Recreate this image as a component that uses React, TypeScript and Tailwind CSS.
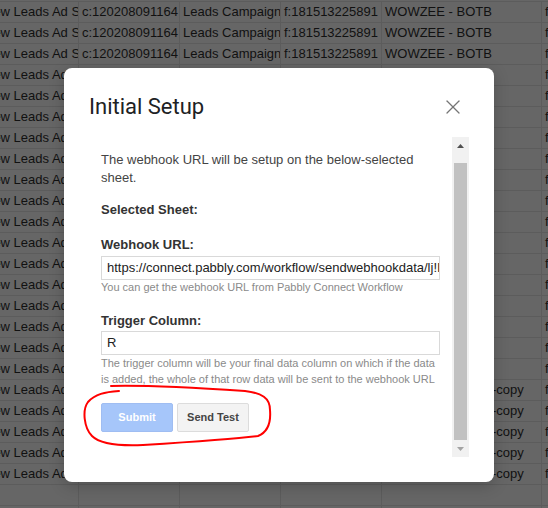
import { X } from "lucide-react";

const COLS = [98, 101, 101, 101, 160, 60];

type Row = string[];

function makeRows(): Row[] {
  const rows: Row[] = [];
  for (let i = 0; i < 23; i++) {
    const campaign = i < 18 ? "WOWZEE - BOTB" : "WOWZEE - BOTB-copy";
    rows.push([
      "New Leads Ad Set",
      "c:120208091164",
      "Leads Campaign",
      "f:181513225891",
      campaign,
      "f:18151",
    ]);
  }
  for (let i = 0; i < 2; i++) rows.push(["", "", "", "", "", ""]);
  return rows;
}

function SheetGrid() {
  const rows = makeRows();
  return (
    <div className="ml-[-19px] mt-[1px] border-t border-[#5c5c5c]">
      {rows.map((row, r) => (
        <div key={r} className="flex h-[21px] border-b border-[#5c5c5c]">
          {row.map((cell, c) => (
            <div
              key={c}
              style={{ width: COLS[c] }}
              className="shrink-0 overflow-hidden whitespace-nowrap border-r border-[#5c5c5c] px-[3px] text-[13px] leading-[20px] text-[#111]"
            >
              {cell}
            </div>
          ))}
        </div>
      ))}
    </div>
  );
}

function Scrollbar() {
  return (
    <div className="flex w-[17px] shrink-0 flex-col bg-[#f1f1f1]">
      <div className="flex h-[17px] items-center justify-center">
        <svg width="7" height="4" viewBox="0 0 7 4">
          <path d="M0 4 L3.5 0 L7 4 Z" fill="#505050" />
        </svg>
      </div>
      <div className="flex flex-1 flex-col pt-[9px]">
        <div className="mx-[2px] flex-1 bg-[#c1c1c1]" />
      </div>
      <div className="flex h-[17px] items-center justify-center">
        <svg width="7" height="4" viewBox="0 0 7 4">
          <path d="M0 0 L7 0 L3.5 4 Z" fill="#a3a3a3" />
        </svg>
      </div>
    </div>
  );
}

function SetupDialog() {
  return (
    <div className="absolute left-[64px] top-[68px] flex h-[414px] w-[430px] flex-col rounded-[8px] bg-white px-[25px] shadow-[0_4px_16px_rgba(0,0,0,0.2)]">
      <div className="flex h-[69px] items-start justify-between pt-[24px]">
        <h1 className="font-['Roboto',sans-serif] text-[22px] leading-[30px] text-[#202124]">
          Initial Setup
        </h1>
        <button className="mt-[-1px] flex h-8 w-8 items-center justify-center text-[#757575]">
          <X size={24} strokeWidth={1.3} />
        </button>
      </div>

      <div className="flex h-[320px]">
        <div className="min-w-0 flex-1 px-3 pt-[14px] font-['Liberation_Sans',Arial,sans-serif]">
          <p className="text-[13px] leading-[18px] text-[#444]">
            The webhook URL will be setup on the below-selected sheet.
          </p>
          <div className="mt-[14px] text-[13px] font-bold leading-[18px] text-[#333]">
            Selected Sheet:
          </div>

          <label className="mt-[17px] block text-[13px] font-bold leading-[18px] text-[#333]">
            Webhook URL:
          </label>
          <div className="mt-[2px] h-[24px] overflow-hidden whitespace-nowrap border border-[#d9d9d9] px-[5px] text-[13px] leading-[22px] text-[#222]">
            https://connect.pabbly.com/workflow/sendwebhookdata/lj!IjUyNjcwNTY4
          </div>
          <p className="text-[11px] leading-[15px] text-[#8a8a8a]">
            You can get the webhook URL from Pabbly Connect Workflow
          </p>

          <label className="mt-[17px] block text-[13px] font-bold leading-[18px] text-[#333]">
            Trigger Column:
          </label>
          <div className="mt-[1px] h-[24px] border border-[#d9d9d9] px-[5px] text-[13px] leading-[22px] text-[#222]">
            R
          </div>
          <p className="text-[11px] leading-[16px] text-[#8a8a8a]">
            The trigger column will be your final data column on which if the data is added,
            the whole of that row data will be sent to the webhook URL
          </p>

          <div className="mt-[16px] flex gap-[4px]">
            <button className="h-[29px] min-w-[72px] rounded-[2px] border border-[#9fbdf2] bg-[#a6c6fa] px-2 text-[11px] font-bold text-white">
              Submit
            </button>
            <button className="h-[29px] min-w-[72px] rounded-[2px] border border-[#dcdcdc] bg-[#f3f3f3] px-2 text-[11px] font-bold text-[#444]">
              Send Test
            </button>
          </div>
        </div>
        <Scrollbar />
      </div>
    </div>
  );
}

// hand-drawn red marker around the buttons
function Markup() {
  return (
    <svg className="pointer-events-none absolute inset-0" width="548" height="508">
      <path
        d="M111,386 C150,385 200,388 245,391 C262,393 270,398 270,410 C271,422 268,432 258,436 C235,439 190,442 143,445 C120,446 100,444 92,436 C84,428 82,410 88,402 C95,394 105,392 119,391"
        fill="none"
        stroke="#ff0000"
        strokeWidth="2"
        strokeLinecap="round"
      />
    </svg>
  );
}

export default function App() {
  return (
    <div className="relative h-[508px] w-[548px] overflow-hidden bg-[#666666] font-['Liberation_Sans',Arial,sans-serif]">
      <SheetGrid />
      <SetupDialog />
      <Markup />
    </div>
  );
}
